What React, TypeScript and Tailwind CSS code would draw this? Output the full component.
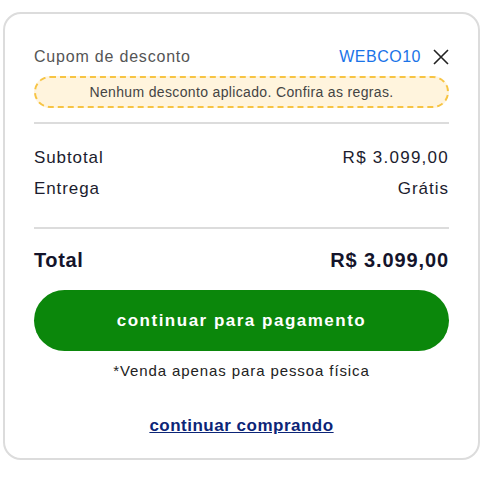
export default function App() {
  return (
    <div className="min-h-screen bg-white pl-[3px] pt-[12px] font-['Liberation_Sans',Arial,sans-serif]">
      <div className="w-[477px] rounded-[18px] border-2 border-[#dcdcdc] bg-white px-[29px] pb-[20px] pt-[31px]">
        {/* cupom */}
        <div className="flex h-[24px] items-center justify-between">
          <span className="text-[16px] tracking-[0.8px] text-[#555]">Cupom de desconto</span>
          <div className="flex items-center gap-[12px]">
            <span className="text-[16px] tracking-[0.5px] text-[#1a73e8]">WEBCO10</span>
            <svg width="16" height="16" viewBox="0 0 16 16" className="text-[#222]">
              <path d="M1 1L15 15M15 1L1 15" stroke="currentColor" strokeWidth="1.6" fill="none" />
            </svg>
          </div>
        </div>
        <div className="mt-[7px] flex h-[32px] items-center justify-center rounded-full border-2 border-dashed border-[#f7c443] bg-[#fff4dd] text-[14px] tracking-[0.35px] text-[#444]">
          Nenhum desconto aplicado. Confira as regras.
        </div>
        <div className="mt-[14px] h-[2px] bg-[#dcdcdc]" />

        {/* valores */}
        <div className="mt-[22px] flex flex-col gap-[7px] text-[17px] leading-[24px] tracking-[0.9px] text-[#1c1c2e]">
          <div className="flex justify-between">
            <span>Subtotal</span>
            <span className="tracking-[1.25px]">R$ 3.099,00</span>
          </div>
          <div className="flex justify-between">
            <span>Entrega</span>
            <span className="tracking-[1px]">Grátis</span>
          </div>
        </div>
        <div className="mt-[26px] h-[2px] bg-[#dcdcdc]" />

        <div className="mt-[17px] flex justify-between text-[20px] font-bold leading-[28px] tracking-[0.6px] text-[#14142b]">
          <span>Total</span>
          <span className="tracking-[0.9px]">R$ 3.099,00</span>
        </div>

        <button className="mt-[16px] flex h-[61px] w-full items-center justify-center rounded-full bg-[#0b870b] text-[17px] font-bold tracking-[1.5px] text-white">
          continuar para pagamento
        </button>
        <p className="mt-[10px] text-center text-[15px] leading-[20px] tracking-[0.9px] text-[#222]">
          *Venda apenas para pessoa física
        </p>
        <div className="mt-[33px] text-center leading-[24px]">
          <a className="text-[17px] font-bold tracking-[0.5px] text-[#0c2577] underline">continuar comprando</a>
        </div>
      </div>
    </div>
  );
}
